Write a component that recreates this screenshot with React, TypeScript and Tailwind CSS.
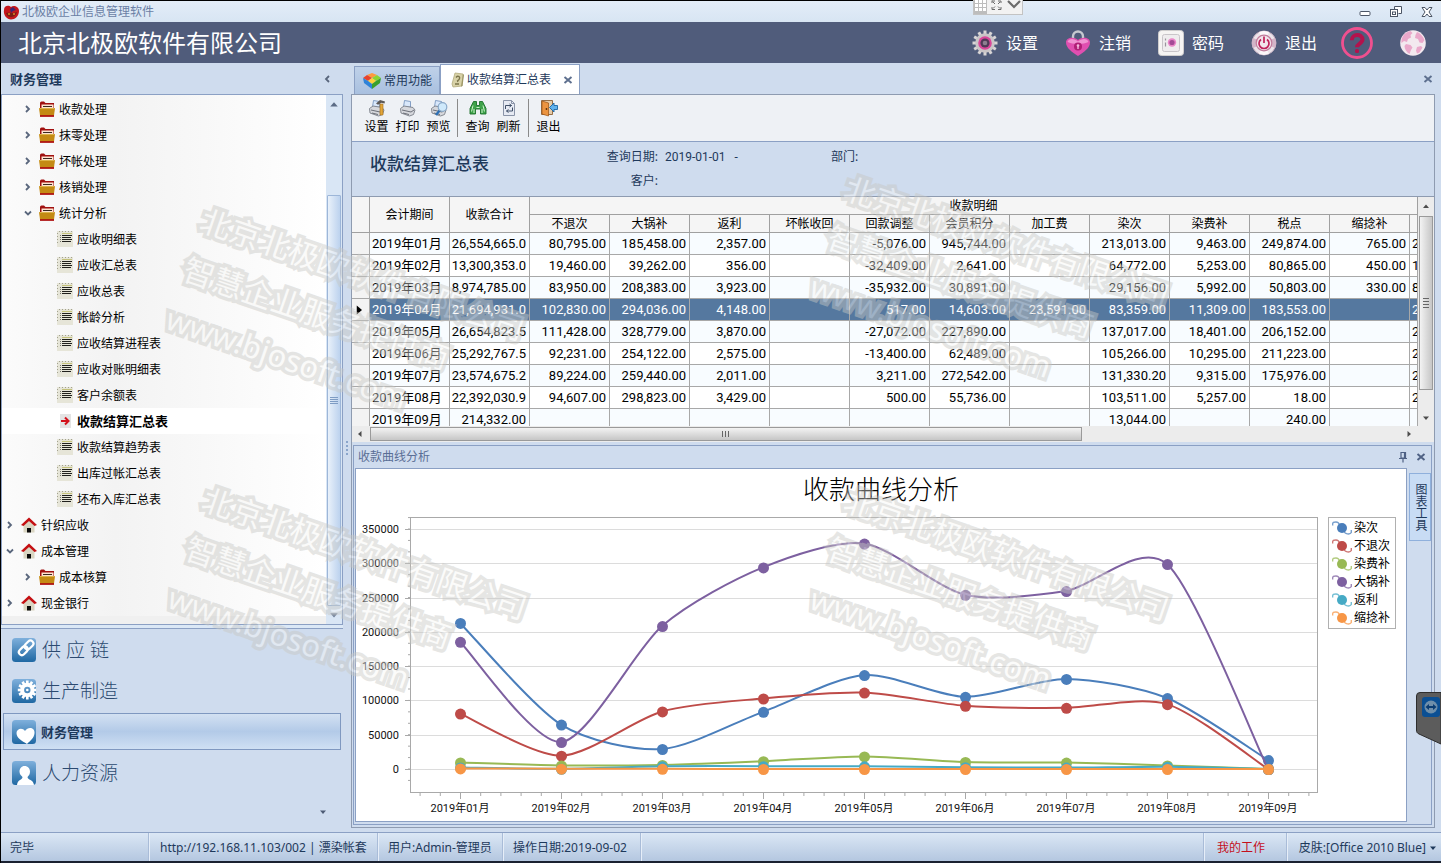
import React from "react";

const UI = "font-['Noto_Sans','Noto_Sans_CJK_SC',sans-serif]";
const NUM = "font-['Roboto','Noto_Sans_CJK_SC',sans-serif]";

/* ---------- small drawings ---------- */

function AppLogo() {
  return (
    <svg width="17" height="15" viewBox="0 0 17 15" aria-hidden="true">
      <path d="M1 5C1 0 6 0 8 2c2-2 8-1 8 4 0 5-4 8.500-8 8.500S0 10 1 5Z" fill="#c3161c" />
      <path d="M7 4l3-2 3 3-3 1-2 2z" fill="#3c2470" />
      <path d="M3 8c3-1 7 1 11-1-1 4-4 5-6 5s-4-1-5-4Z" fill="#7a1d12" />
      <circle cx="6" cy="9" r="1" fill="#d98a2b" />
      <circle cx="11" cy="9" r="1" fill="#d98a2b" />
    </svg>
  );
}

function FolderIcon() {
  return (
    <svg width="16" height="16" viewBox="0 0 16 16" aria-hidden="true">
      <path d="M1 2q0-1.500 1.500-1.500H5L6.500 2H15v13.500H1z" fill="#a01010" />
      <path d="M2.500 3.500h12V9h-12z" fill="#ffe3d0" />
      <path d="M4 5.500h9" stroke="#3a2a20" />
      <path d="M0 7h16l-1 7.500H1z" fill="#c48a14" />
      <path d="M0.500 7.500h15" stroke="#dcb44a" />
      <path d="M1 15h14" stroke="#b01010" strokeWidth="1.500" />
    </svg>
  );
}

function ListIcon() {
  return (
    <svg width="16" height="16" viewBox="0 0 16 16" shapeRendering="crispEdges" aria-hidden="true">
      <path d="M0 0h16v16H0z" fill="#e6e5d8" />
      <path d="M0.500 2v12M2 0.500h13" stroke="#a3a28f" strokeDasharray="1 2" />
      <path d="M5 2.500h10" stroke="#c4c17a" />
      <path d="M5 4.500h10M5 6.500h9M5 8.500h10M5 10.500h9" stroke="#20201c" />
      <path d="M3 4.500h1M3 6.500h1M3 8.500h1M3 10.500h1" stroke="#77776c" />
    </svg>
  );
}

function CurrentIcon() {
  return (
    <svg width="16" height="16" viewBox="0 0 16 16" aria-hidden="true">
      <path d="M3 1h11v14H3z" fill="#e4e4e4" />
      <path d="M4 8h7M8 4.500L11.500 8 8 11.500" stroke="#d3121c" strokeWidth="2" fill="none" />
    </svg>
  );
}

function HouseIcon() {
  return (
    <svg width="16" height="16" viewBox="0 0 16 16" aria-hidden="true">
      <path d="M2.500 7.500L8 3l5.500 4.500V15.500h-11z" fill="#d9d5c2" />
      <path d="M6 11h4v4.500H6z" fill="#0a0a0a" />
      <path d="M0 8L8 0.500 16 8l-2.500 1L8 4 2.500 9z" fill="#c40f12" />
    </svg>
  );
}

function Chevron({ open }: { open: boolean }) {
  return (
    <svg width="8" height="8" viewBox="0 0 8 8" aria-hidden="true">
      <path d={open ? "M1 2.500l3 3 3-3" : "M2 1l3 3-3 3"} fill="none" stroke="#59667c" strokeWidth="1.800" />
    </svg>
  );
}

function CloseX({ color = "#5d6f8e" }: { color?: string }) {
  return (
    <svg width="10" height="10" viewBox="0 0 10 10" aria-hidden="true">
      <path d="M1.500 2l7 6M8.500 2l-7 6" stroke={color} strokeWidth="1.900" />
    </svg>
  );
}

function Arrow({ dir, color = "#4c4c4c", size = 8 }: { dir: "up" | "down" | "left" | "right"; color?: string; size?: number }) {
  const paths = {
    up: "M1 6l3-3.500L7 6z",
    down: "M1 2.500l3 3.500 3-3.500z",
    left: "M5.500 1L2 4l3.500 3z",
    right: "M2.500 1L6 4 2.500 7z",
  };
  return (
    <svg width={size} height={size} viewBox="0 0 8 8" aria-hidden="true">
      <path d={paths[dir]} fill={color} />
    </svg>
  );
}

const TEETH = [0, 30, 60, 90, 120, 150, 180, 210, 240, 270, 300, 330];

function GearPink() {
  return (
    <svg width="26" height="26" viewBox="0 0 26 26" aria-hidden="true">
      {TEETH.map((a) => (
        <rect key={a} x="11.500" y="0.500" width="3" height="5" fill="#d9d6d6" transform={`rotate(${a} 13 13)`} />
      ))}
      <circle cx="13" cy="13" r="9.800" fill="#c9c5c7" />
      <circle cx="13" cy="13" r="6.800" fill="#d9479a" />
      <circle cx="13" cy="13" r="4.600" fill="#4f3a57" />
      <circle cx="13" cy="13" r="2.300" fill="#8d7e90" />
    </svg>
  );
}

function LockPink() {
  return (
    <svg width="26" height="26" viewBox="0 0 26 26" aria-hidden="true">
      <path d="M8 11V6.500a5 5 0 0110 0V11" fill="none" stroke="#c6c9cf" strokeWidth="2.400" />
      <path d="M13 26C7 22 1 18 1 12.500 1 7 9 6.500 13 10c4-3.500 12-3 12 2.500C25 18 19 22 13 26Z" fill="#e04fb0" />
      <path d="M2.500 12c1-4 7-4 10.500-.5 3.500-3.500 9.500-3.500 10.500.5-5 2.500-16 2.500-21 0Z" fill="#f193d2" />
      <circle cx="13" cy="16.500" r="4" fill="#b01f76" />
      <circle cx="13" cy="15.500" r="1.300" fill="#f5b7de" />
      <path d="M13 16v3" stroke="#f5b7de" strokeWidth="1.400" />
    </svg>
  );
}

function SafeIcon() {
  return (
    <svg width="26" height="26" viewBox="0 0 26 26" aria-hidden="true">
      <rect x="0.500" y="0.500" width="25" height="25" rx="3" fill="#f6f4f3" stroke="#cfcdcd" />
      <rect x="4.500" y="4.500" width="17" height="17" rx="2" fill="#efecee" stroke="#c9c5c9" />
      <circle cx="14" cy="12.500" r="4.200" fill="#ea86c8" />
      <circle cx="14" cy="12.500" r="2.600" fill="#a34a96" />
      <path d="M7.500 8.500v2M7.500 12.500v4" stroke="#9a949c" strokeWidth="1.200" />
    </svg>
  );
}

function PowerIcon() {
  return (
    <svg width="26" height="26" viewBox="0 0 26 26" aria-hidden="true">
      <circle cx="13" cy="13" r="12" fill="#ece4eb" stroke="#c3aebf" />
      <path d="M13 13L8 2.200a12 12 0 0110 0zM13 13l5 10.800a12 12 0 01-10 0z" fill="#fbf7fa" />
      <path d="M13 13L2.200 8a12 12 0 000 10zM13 13l10.800 5a12 12 0 000-10z" fill="#d3b4c8" />
      <circle cx="13" cy="13" r="7.800" fill="#f1e4ec" stroke="#c07c9c" strokeWidth="1.200" />
      <path d="M10 9.500a5 5 0 106 0M13 6.500v6.500" fill="none" stroke="#c0205a" strokeWidth="1.700" />
    </svg>
  );
}

function HelpIcon() {
  return (
    <svg width="32" height="32" viewBox="0 0 32 32" aria-hidden="true">
      <circle cx="16" cy="16" r="14.500" fill="none" stroke="#f0508f" strokeWidth="2.800" />
      <path d="M10.800 13.200C10.800 6.500 21.500 6.500 21.500 12.600c0 3.800-5.500 4-5.500 7.600" fill="none" stroke="#b3124d" strokeWidth="4" />
      <rect x="14" y="22" width="4" height="4" rx="1.500" fill="#b3124d" />
    </svg>
  );
}

function GlobeIcon() {
  return (
    <svg width="26" height="26" viewBox="0 0 26 26" aria-hidden="true">
      <circle cx="13" cy="13" r="12.800" fill="#f3e9ef" />
      <path d="M4 4.500c2-2 4-3 6.500-3.500l2 2-2 2 .5 2.500L8 9l-1 3-3-1-2.500 2C1 10 2 7 4 4.500ZM17 2c3 1 6 4 7.500 8l-2 3-3-.5L18 9l-3-1 .5-3zM6 14l4.500 1 2 2.500-1.500 2.500-1.500 4c-3-1.500-5-5-5-8zM17 17l4-1 1.500 1.500-3 5-2.500 1-1-3z" fill="#eaa8ca" />
    </svg>
  );
}

function BlocksIcon() {
  return (
    <svg width="20" height="16" viewBox="0 0 20 16" aria-hidden="true">
      <path d="M5 2l5-2 5 2-5 3z" fill="#ff9a3c" />
      <path d="M1 5l4-3 5 3-4 3z" fill="#e8432d" />
      <path d="M10 5l5-3 4 3-5 3z" fill="#8bd431" />
      <path d="M6 8l4-3 4 3-4 3z" fill="#ffd23a" />
      <path d="M1 5l5 3 4 3v5L2 10z" fill="#2f83d8" />
      <path d="M19 5l-5 3-4 3v5l8-6z" fill="#3aa02b" />
    </svg>
  );
}

function NoteIcon() {
  return (
    <svg width="14" height="16" viewBox="0 0 14 16" aria-hidden="true">
      <path d="M4 1l8 1-1 12-9 1-1-3z" fill="#d8d2a8" stroke="#b3ab7c" strokeWidth="0.800" />
      <path d="M5 5.500c2-2.500 5-.5 3 2L6.500 9l.5 1M4 12h4" stroke="#7a744a" strokeWidth="1.300" fill="none" />
      <path d="M12 2l1 1-1.500 11-1.500.5z" fill="#9d9767" />
    </svg>
  );
}

function PrinterIcon({ extra }: { extra?: "hammer" | "lens" }) {
  return (
    <svg width="18" height="18" viewBox="0 0 18 18" aria-hidden="true">
      <path d="M4.500 8L5.500 1.500l6 1V8z" fill="#d9e8fb" stroke="#6b8bb8" strokeWidth="0.800" />
      <path d="M1.500 9.500L5 7l9 1.500 2 2.500-1.500 4.500-4 1.500L2 14z" fill="#d6d8dd" stroke="#7b7f88" strokeWidth="0.900" />
      <path d="M3 11l9 2 3-2M4 14l6 1.500" stroke="#6b6f78" fill="none" />
      {extra === "hammer" && (
        <g>
          <path d="M8 4.500L12 1l5 1.500-.5 2-3-.8-3.500 2z" fill="#5c5856" />
          <path d="M12 5h3v11h-3z" fill="#e2a63a" stroke="#a36d17" strokeWidth="0.600" />
        </g>
      )}
      {extra === "lens" && (
        <g>
          <path d="M10 11l-4 5" stroke="#2c6fb4" strokeWidth="2.400" />
          <circle cx="12.500" cy="8" r="4.300" fill="#cfe9fb" stroke="#8aa9c9" strokeWidth="1.200" />
        </g>
      )}
    </svg>
  );
}

function BinocularsIcon() {
  return (
    <svg width="18" height="18" viewBox="0 0 18 18" aria-hidden="true">
      <path d="M4.500 2.500h3v4h3v-4h3l3.500 7v5.500h-5.500v-5h-5v5H1V9.500z" fill="#3fa34a" stroke="#1c6f2a" strokeWidth="0.900" />
      <path d="M4 6.500l-1.500 6M14 6.500l1.500 6M5 10v4M13 10v4M7.500 8.500h3" stroke="#c9f2c9" />
    </svg>
  );
}

function RefreshDocIcon() {
  return (
    <svg width="18" height="18" viewBox="0 0 18 18" aria-hidden="true">
      <path d="M3.500 1.500h8l3 3v12h-11z" fill="#e6eaf3" stroke="#8a94a8" />
      <path d="M11.500 1.500v3h3" fill="none" stroke="#8a94a8" />
      <path d="M5.500 10V6.500h6M9.500 5l2 1.500-2 1.500M12.500 8.500V12h-6M8.500 10.500l-2 1.500 2 1.500" fill="none" stroke="#3f4f68" />
    </svg>
  );
}

function DoorIcon() {
  return (
    <svg width="18" height="18" viewBox="0 0 18 18" aria-hidden="true">
      <path d="M1.500 1.500h11v14h-11z" fill="#e5cba8" stroke="#8c6239" strokeWidth="0.900" />
      <path d="M2 2l6.500 2v13L2 15z" fill="#ec9440" stroke="#9a5214" strokeWidth="0.700" />
      <circle cx="6.500" cy="10" r="0.900" fill="#5a2e08" />
      <path d="M17.500 6.500v4H14V13L9.500 8.500 14 4v2.500z" fill="#5fb2ee" stroke="#1b64a3" strokeWidth="0.900" />
    </svg>
  );
}

function NavIcon({ kind }: { kind: string }) {
  return (
    <svg width="24" height="24" viewBox="0 0 24 24" aria-hidden="true">
      <defs>
        <linearGradient id={`nav-${kind}`} x1="0" y1="0" x2="0" y2="1">
          <stop offset="0" stopColor="#7fb0dc" />
          <stop offset="1" stopColor="#1f68a3" />
        </linearGradient>
      </defs>
      <rect width="24" height="24" rx="3.500" fill={`url(#nav-${kind})`} />
      {kind === "chain" && (
        <g fill="none" stroke="#fff" strokeWidth="2.200" transform="rotate(-45 14.500 9.500)">
          <rect x="5" y="6.500" width="10" height="6" rx="3" />
          <rect x="13" y="6.500" width="10" height="6" rx="3" />
        </g>
      )}
      {kind === "gear" && (
        <g>
          {TEETH.map((a) => (
            <rect key={a} x="14" y="1.500" width="2.600" height="4" fill="#fff" transform={`rotate(${a} 15.300 11)`} />
          ))}
          <circle cx="15.300" cy="11" r="5.200" fill="none" stroke="#fff" strokeWidth="4" />
          <circle cx="15.300" cy="11" r="1.300" fill="#fff" />
        </g>
      )}
      {kind === "heart" && (
        <path d="M15 24C10 21 4.500 18 4.500 13c0-4.500 6-6 8.500-2 3-5 10-3.500 9.500 2 -.3 5-4.500 8-7.500 11Z" fill="#fff" />
      )}
      {kind === "person" && (
        <path d="M12.500 5c3.500 0 5.500 2.500 5.500 5.500 0 2.500-1 4-2.500 5.500 0 3 6 2.500 6.500 8H5c.5-5.500 5.500-5 5.500-8C9 14.500 7.500 13 7.500 10.500 7.500 7.500 9.500 5 12.500 5Z" fill="#fff" />
      )}
    </svg>
  );
}

/* ---------- data ---------- */

type Node = { label: string; level: 0 | 1 | 2; open?: boolean; current?: boolean };

const tree: Node[] = [
  { label: "收款处理", level: 1 },
  { label: "抹零处理", level: 1 },
  { label: "坏帐处理", level: 1 },
  { label: "核销处理", level: 1 },
  { label: "统计分析", level: 1, open: true },
  { label: "应收明细表", level: 2 },
  { label: "应收汇总表", level: 2 },
  { label: "应收总表", level: 2 },
  { label: "帐龄分析", level: 2 },
  { label: "应收结算进程表", level: 2 },
  { label: "应收对账明细表", level: 2 },
  { label: "客户余额表", level: 2 },
  { label: "收款结算汇总表", level: 2, current: true },
  { label: "收款结算趋势表", level: 2 },
  { label: "出库过帐汇总表", level: 2 },
  { label: "坯布入库汇总表", level: 2 },
  { label: "针织应收", level: 0 },
  { label: "成本管理", level: 0, open: true },
  { label: "成本核算", level: 1 },
  { label: "现金银行", level: 0 },
];

const modules = [
  { label: "供 应 链", kind: "chain" },
  { label: "生产制造", kind: "gear" },
  { label: "财务管理", kind: "heart", active: true },
  { label: "人力资源", kind: "person" },
];

const detailColumns = ["不退次", "大锅补", "返利", "坏帐收回", "回款调整", "会员积分", "加工费", "染次", "染费补", "税点", "缩捻补", ""];

const rows: string[][] = [
  ["2019年01月", "26,554,665.0", "80,795.00", "185,458.00", "2,357.00", "", "-5,076.00", "945,744.00", "", "213,013.00", "9,463.00", "249,874.00", "765.00", "2"],
  ["2019年02月", "13,300,353.0", "19,460.00", "39,262.00", "356.00", "", "-32,409.00", "2,641.00", "", "64,772.00", "5,253.00", "80,865.00", "450.00", "1"],
  ["2019年03月", "8,974,785.00", "83,950.00", "208,383.00", "3,923.00", "", "-35,932.00", "30,891.00", "", "29,156.00", "5,992.00", "50,803.00", "330.00", "8"],
  ["2019年04月", "21,694,931.0", "102,830.00", "294,036.00", "4,148.00", "", "517.00", "14,603.00", "23,591.00", "83,359.00", "11,309.00", "183,553.00", "", "2"],
  ["2019年05月", "26,654,823.5", "111,428.00", "328,779.00", "3,870.00", "", "-27,072.00", "227,890.00", "", "137,017.00", "18,401.00", "206,152.00", "", "2"],
  ["2019年06月", "25,292,767.5", "92,231.00", "254,122.00", "2,575.00", "", "-13,400.00", "62,489.00", "", "105,266.00", "10,295.00", "211,223.00", "", "2"],
  ["2019年07月", "23,574,675.2", "89,224.00", "259,440.00", "2,011.00", "", "3,211.00", "272,542.00", "", "131,330.20", "9,315.00", "175,976.00", "", "2"],
  ["2019年08月", "22,392,030.9", "94,607.00", "298,823.00", "3,429.00", "", "500.00", "55,736.00", "", "103,511.00", "5,257.00", "18.00", "", "2"],
  ["2019年09月", "214,332.00", "", "", "", "", "", "", "", "13,044.00", "", "240.00", "", ""],
];
const SELECTED_ROW = 3;

const series = [
  { name: "染次", color: "#4a7ebb", values: [213013, 64772, 29156, 83359, 137017, 105266, 131330, 103511, 13044] },
  { name: "不退次", color: "#be4b48", values: [80795, 19460, 83950, 102830, 111428, 92231, 89224, 94607, 0] },
  { name: "染费补", color: "#98b954", values: [9463, 5253, 5992, 11309, 18401, 10295, 9315, 5257, 0] },
  { name: "大锅补", color: "#7d60a0", values: [185458, 39262, 208383, 294036, 328779, 254122, 259440, 298823, 0] },
  { name: "返利", color: "#46aac5", values: [2357, 356, 3923, 4148, 3870, 2575, 2011, 3429, 0] },
  { name: "缩捻补", color: "#f79646", values: [765, 450, 330, 0, 0, 0, 0, 0, 0] },
];

/* ---------- chart ---------- */

const PX = { left: 54, right: 961, top: 1, bottom: 276, zero: 252, unit: 240 / 350000, x0: 104, step: 101 };
const cx = (i: number) => PX.x0 + i * PX.step;
const cy = (v: number) => PX.zero - v * PX.unit;

function splinePath(values: number[]) {
  const p = values.map((v, i) => [cx(i), cy(v)]);
  const k = 0.8 / 6;
  let d = `M${p[0][0]} ${p[0][1]}`;
  for (let i = 0; i < p.length - 1; i++) {
    const a = p[Math.max(i - 1, 0)];
    const b = p[i];
    const c = p[i + 1];
    const e = p[Math.min(i + 2, p.length - 1)];
    d += `C${b[0] + (c[0] - a[0]) * k} ${b[1] + (c[1] - a[1]) * k} ${c[0] - (e[0] - b[0]) * k} ${c[1] - (e[1] - b[1]) * k} ${c[0]} ${c[1]}`;
  }
  return d;
}

function Chart() {
  const marks = [0, 50000, 100000, 150000, 200000, 250000, 300000, 350000];
  const minorY = Array.from({ length: 24 }, (_, i) => cy((i - 1) * (50000 / 3)));
  const minorX = Array.from({ length: 45 }, (_, i) => PX.x0 + (i - 2) * (PX.step / 5)).filter((x) => x < PX.right);
  return (
    <svg viewBox="0 0 962 304" className={`block h-auto w-full ${NUM}`} role="img" aria-label="收款曲线分析">
      <rect x={PX.left + 0.5} y={PX.top - 0.5} width={PX.right - PX.left} height={PX.bottom - PX.top} fill="#fff" stroke="#a9a9a9" />
      {marks.map((m) => (
        <g key={m}>
          <line x1={PX.left - 5} x2={PX.left} y1={Math.round(cy(m)) + 0.5} y2={Math.round(cy(m)) + 0.5} stroke="#a9a9a9" />
          <line x1={PX.left + 1} x2={PX.right} y1={Math.round(cy(m)) + 0.5} y2={Math.round(cy(m)) + 0.5} stroke="#dcdcdc" />
          <text x={PX.left - 11} y={cy(m) + 4} textAnchor="end" fontSize="11" fill="#111">
            {m}
          </text>
        </g>
      ))}
      {minorY.map((y) => (
        <line key={y} x1={PX.left - 2} x2={PX.left} y1={y} y2={y} stroke="#a9a9a9" />
      ))}
      {minorX.map((x) => (
        <line key={x} x1={x + 0.5} x2={x + 0.5} y1={PX.bottom} y2={PX.bottom + 3} stroke="#a9a9a9" />
      ))}
      {rows.map((r, i) => (
        <g key={r[0]}>
          <line x1={cx(i) + 0.5} x2={cx(i) + 0.5} y1={PX.bottom} y2={PX.bottom + 6} stroke="#a9a9a9" />
          <text x={cx(i)} y={PX.bottom + 19} textAnchor="middle" fontSize="11" fill="#111">
            {r[0]}
          </text>
        </g>
      ))}
      {series.map((s) => (
        <g key={s.name}>
          <path d={splinePath(s.values)} fill="none" stroke={s.color} strokeWidth="2" />
          {s.values.map((v, i) => (
            <circle key={i} cx={cx(i) + 0.5} cy={cy(v) + 0.5} r="5.500" fill={s.color} />
          ))}
        </g>
      ))}
    </svg>
  );
}

function Legend() {
  return (
    <ul className="w-[68px] shrink-0 self-start border border-[#b0b0b0] bg-white py-px pl-[3px]">
      {series.map((s) => (
        <li key={s.name} className="flex h-[18px] items-center gap-[2px] whitespace-nowrap text-[12px] leading-[18px] text-black">
          <svg width="20" height="14" viewBox="0 0 20 14" className="shrink-0" aria-hidden="true">
            <path d="M0.700 4.500C0.200 1 2 1 4 1s3 1 3.500 3M12 10c.5 3 6 4 7.300 1.500V9" fill="none" stroke={s.color} strokeOpacity="0.750" strokeWidth="1.400" />
            <circle cx="10" cy="7" r="5" fill={s.color} />
          </svg>
          {s.name}
        </li>
      ))}
    </ul>
  );
}

/* ---------- sections ---------- */

function TitleBar() {
  return (
    <div className="flex h-[22px] items-center border-t border-black bg-gradient-to-b from-[#e3edf8] to-[#d8e5f3] pt-px pr-2 pl-[2px] text-[#6b7fa5]">
      <AppLogo />
      <span className="ml-[2px] text-[12px]">北极欧企业信息管理软件</span>
      <div className="ml-auto flex items-center gap-[19px]">
        <button aria-label="最小化">
          <svg width="12" height="12" viewBox="0 0 12 12" className="block">
            <rect x="1" y="5.500" width="10" height="4" rx="1" fill="#fff" stroke="#4c5666" />
          </svg>
        </button>
        <button aria-label="还原">
          <svg width="12" height="12" viewBox="0 0 12 12" className="block">
            <path d="M4.500 0.500h7v7h-3M4.500 3V0.500" fill="#fff" stroke="#4c5666" />
            <rect x="0.500" y="3.500" width="7" height="7" fill="#fff" stroke="#4c5666" />
            <rect x="2.500" y="6" width="3" height="2.500" fill="#fff" stroke="#4c5666" />
          </svg>
        </button>
        <button aria-label="关闭">
          <svg width="12" height="12" viewBox="0 0 12 12" className="block">
            <path d="M1 1.500h3l2 2.500 2-2.500h3L8 6l3 4.500H8L6 8l-2 2.500H1L4 6z" fill="#fff" stroke="#4c5666" />
          </svg>
        </button>
      </div>
    </div>
  );
}

function Header() {
  const items = [
    { label: "设置", icon: <GearPink /> },
    { label: "注销", icon: <LockPink /> },
    { label: "密码", icon: <SafeIcon /> },
    { label: "退出", icon: <PowerIcon /> },
  ];
  return (
    <header className="flex h-[41px] items-center bg-[#505c7b] pr-[15px] pl-[17px] text-white">
      <h1 className="text-[24px] leading-8">北京北极欧软件有限公司</h1>
      <div className="ml-auto flex items-center gap-[27px]">
        {items.map((it) => (
          <button key={it.label} className="flex items-center gap-2 text-[16px]">
            {it.icon}
            {it.label}
          </button>
        ))}
        <button aria-label="帮助" className="-ml-[3px]">
          <HelpIcon />
        </button>
        <button aria-label="网站">
          <GlobeIcon />
        </button>
      </div>
    </header>
  );
}

const INDENT = ["pl-[4px]", "pl-[22px]", "pl-[40px]"];

function Sidebar() {
  return (
    <aside className="flex w-[342px] shrink-0 flex-col">
      <div className="flex h-[31px] items-center justify-between pr-3 pl-[9px]">
        <h2 className="text-[13px] font-bold text-[#1e395b]">财务管理</h2>
        <button aria-label="收起" className="rotate-180">
          <Chevron open={false} />
        </button>
      </div>
      <div className="flex border border-[#8ba0c4] bg-[#f2f2f2]">
        <ul className="min-w-0 flex-1 bg-gradient-to-r from-[#fbfbfb] via-[#f3f3f3] via-35% to-white pt-px">
          {tree.map((n) => (
            <li key={n.label} className={n.current ? "bg-white font-bold" : ""}>
              <button className={`flex h-[26px] w-full items-center text-[12px] text-black ${INDENT[n.level]}`}>
                <span className="mr-[7px] flex w-2 justify-center">{n.level < 2 && <Chevron open={!!n.open} />}</span>
                {n.level === 0 && <HouseIcon />}
                {n.level === 1 && <FolderIcon />}
                {n.level === 2 && (n.current ? <CurrentIcon /> : <ListIcon />)}
                <span className={n.current ? "ml-1 text-[13px]" : "ml-1 pt-px"}>{n.label}</span>
              </button>
            </li>
          ))}
          <li className="h-2 bg-[#f0f0f0]" aria-hidden="true" />
        </ul>
        <div className="flex w-[16px] flex-col items-center bg-[#d9e6f5] py-1">
          <Arrow dir="up" color="#5b6b85" size={10} />
          <div className="mt-[86px] flex w-[14px] flex-1 flex-col items-center justify-center gap-[1px] rounded-[1px] border border-[#9db6d8] bg-gradient-to-r from-[#e9f1fa] to-[#bcd2ee]">
            {[0, 1, 2, 3].map((i) => (
              <span key={i} className="h-px w-2 bg-[#7e9cc4]" />
            ))}
          </div>
          <div className="mt-1">
            <Arrow dir="down" color="#6f7f99" size={10} />
          </div>
        </div>
      </div>
      <div className="h-[4px] border-b border-[#8ba0c4] bg-[#dbe8f6]" />
      <nav className="flex flex-1 flex-col pr-[2px] pl-[2px]">
        {modules.map((m) => (
          <button
            key={m.label}
            className={
              m.active
                ? "my-[2px] flex h-[37px] items-center gap-[5px] border border-[#7f98c0] bg-gradient-to-b from-[#d3e1f2] via-[#b3cae8] to-[#cfe0f3] pl-2 text-[13px] font-bold text-[#1e395b]"
                : "flex h-[41px] items-center gap-[6px] pl-[9px] text-[19px] font-light text-[#2c4a70]"
            }
          >
            <NavIcon kind={m.kind} />
            {m.label}
          </button>
        ))}
        <div className="mt-auto mb-[16px] flex justify-end pr-[14px]">
          <button aria-label="更多">
            <Arrow dir="down" color="#4d5b74" />
          </button>
        </div>
      </nav>
    </aside>
  );
}

function Toolbar() {
  const groups = [
    [
      { label: "设置", icon: <PrinterIcon extra="hammer" /> },
      { label: "打印", icon: <PrinterIcon /> },
      { label: "预览", icon: <PrinterIcon extra="lens" /> },
    ],
    [
      { label: "查询", icon: <BinocularsIcon /> },
      { label: "刷新", icon: <RefreshDocIcon /> },
    ],
    [{ label: "退出", icon: <DoorIcon /> }],
  ];
  return (
    <div className="flex h-[47px] items-center border-b border-[#8ba0c4] bg-[#eef1f5] pl-[9px]">
      {groups.map((g, i) => (
        <div key={i} className={i === 0 ? "flex h-[38px] items-center pr-[3px]" : "flex h-[38px] items-center border-l border-[#8a8a8a] px-1"}>
          {g.map((b) => (
            <button key={b.label} className="flex w-[31px] flex-col items-center text-[12px] leading-[20px] text-black">
              {b.icon}
              {b.label}
            </button>
          ))}
        </div>
      ))}
    </div>
  );
}

function Grid() {
  const th = "border-r border-b border-[#a0a0a0] bg-[#f5f5f5] p-0 text-[12px] font-normal leading-[17px] whitespace-nowrap";
  return (
    <div className="flex border-t border-[#8e9bb0] bg-[#ececec]">
      <div className="min-w-0 flex-1">
        <div className="h-[229px] overflow-hidden bg-white">
          <table className="w-full table-fixed border-separate border-spacing-0 text-black">
            <colgroup>
              <col className="w-[18px]" />
              {Array.from({ length: 13 }, (_, i) => (
                <col key={i} className="w-[80px]" />
              ))}
              <col />
            </colgroup>
            <thead>
              <tr className="h-[18px]">
                <th rowSpan={2} className={th} />
                <th rowSpan={2} className={th}>会计期间</th>
                <th rowSpan={2} className={th}>收款合计</th>
                <th colSpan={12} className={th}>收款明细</th>
              </tr>
              <tr className="h-[18px]">
                {detailColumns.map((c) => (
                  <th key={c} className={th}>
                    {c}
                  </th>
                ))}
              </tr>
            </thead>
            <tbody className={NUM}>
              {rows.map((r, ri) => {
                const sel = ri === SELECTED_ROW;
                const tone = sel ? "bg-[#55789f] text-white" : ri % 2 === 0 ? "bg-[#f8fcff]" : "bg-white";
                return (
                  <tr key={r[0]} className="h-[22px]">
                    <td className="border-r border-b border-[#a8a8a8] bg-[#f3f3f3] p-0">
                      {sel && (
                        <span className="flex justify-center pr-1">
                          <Arrow dir="right" color="#000" size={12} />
                        </span>
                      )}
                    </td>
                    {r.map((c, ci) => (
                      <td
                        key={ci}
                        className={`overflow-hidden border-r border-b border-[#a8a8a8] py-0 text-[13px] leading-[21px] whitespace-nowrap ${ci === 0 || ci === 13 ? "pr-0 pl-[2px] text-left" : "pr-[3px] pl-0 text-right"} ${tone}`}
                      >
                        {c}
                      </td>
                    ))}
                  </tr>
                );
              })}
            </tbody>
          </table>
        </div>
        <div className="flex h-[16px] items-center gap-[6px] pl-1">
          <Arrow dir="left" />
          <div className="flex h-[14px] w-[67%] items-center justify-center gap-[2px] border border-[#9a9a9a] bg-gradient-to-b from-[#f3f3f3] to-[#c6c6c6]">
            {[0, 1, 2].map((i) => (
              <span key={i} className="h-[6px] w-px bg-[#666]" />
            ))}
          </div>
          <div className="mr-[5px] ml-auto flex">
            <Arrow dir="right" />
          </div>
        </div>
      </div>
      <div className="flex w-4 flex-col items-center py-[5px]">
        <Arrow dir="up" />
        <div className="mt-[6px] flex h-[174px] w-[14px] flex-col items-center justify-center gap-[2px] border border-[#9a9a9a] bg-gradient-to-r from-[#f3f3f3] to-[#c6c6c6]">
          {[0, 1, 2, 3].map((i) => (
            <span key={i} className="h-px w-[6px] bg-[#666]" />
          ))}
        </div>
        <div className="mt-6">
          <Arrow dir="down" />
        </div>
      </div>
    </div>
  );
}

function ChartPanel() {
  return (
    <section className="mt-[3px] mr-[2px] mb-[2px] ml-[1px] flex flex-1 flex-col border border-[#8ba0c4] pb-[2px]">
      <div className="flex h-[22px] items-center pr-[5px] pl-1 text-[12px] text-[#5a6e95]">
        <h3>收款曲线分析</h3>
        <button aria-label="固定" className="mr-2 ml-auto">
          <svg width="10" height="12" viewBox="0 0 10 12">
            <path d="M3 1.500h4.500V7H3zM1 7.500h8M5 7.500V11.500M6.500 1.500V7" fill="none" stroke="#4f6184" strokeWidth="1.200" />
          </svg>
        </button>
        <button aria-label="关闭面板">
          <CloseX color="#4f6184" />
        </button>
      </div>
      <div className="flex flex-1 items-start">
        <div className="ml-[1px] min-w-0 flex-1 self-stretch border border-[#8ba0c4] bg-white">
          <h4 className="h-[48px] pt-[3px] text-center text-[26px] leading-[34px] font-light text-black">收款曲线分析</h4>
          <div className="flex pr-[10px]">
            <div className="mr-[10px] min-w-0 flex-1">
              <Chart />
            </div>
            <Legend />
          </div>
        </div>
        <button className="mt-[5px] ml-[2px] flex h-[68px] w-[22px] items-center justify-center border border-[#8fb0dc] bg-[#c8dcf4] text-[12px] leading-5 text-[#1e395b] [writing-mode:vertical-rl]">
          图表工具
        </button>
      </div>
    </section>
  );
}

function Workspace() {
  return (
    <main className="flex min-w-0 flex-1 flex-col pr-[6px]">
      <div className="flex h-[31px] items-end pl-[3px]" role="tablist">
        <button role="tab" aria-selected="false" className="flex h-[28px] items-center gap-[2px] border border-b-0 border-[#8ba0c4] bg-gradient-to-b from-[#bfd1e9] to-[#a9c0df] px-[7px] text-[12px] text-[#1e395b]">
          <BlocksIcon />
          常用功能
        </button>
        <button role="tab" aria-selected="true" className="flex h-[30px] items-center gap-[2px] border border-b-0 border-[#8ba0c4] bg-white pr-[6px] pl-[10px] text-[12px] text-[#1e395b]">
          <NoteIcon />
          收款结算汇总表
          <span className="ml-[10px]">
            <CloseX />
          </span>
        </button>
        <button aria-label="关闭" className="mr-[2px] mb-[10px] ml-auto">
          <CloseX />
        </button>
      </div>
      <div className="mb-[4px] flex flex-1 flex-col border border-[#8e9bb0] bg-[#cfdcee]">
        <Toolbar />
        <div className="flex h-[54px] items-start pl-[18px] text-[#1e395b]">
          <h2 className="mt-[10px] w-[234px] text-[17px] leading-6 font-medium">收款结算汇总表</h2>
          <dl className="grid grid-cols-[54px_159px_28px_1fr] gap-x-[7px] pt-[3px] text-[12px] leading-6 whitespace-nowrap">
            <dt className="text-right">查询日期:</dt>
            <dd className="font-['Roboto',sans-serif] whitespace-pre">2019-01-01   -</dd>
            <dt>部门:</dt>
            <dd />
            <dt className="text-right">客户:</dt>
            <dd />
          </dl>
        </div>
        <Grid />
        <ChartPanel />
      </div>
    </main>
  );
}

function StatusBar() {
  const cell = "flex h-full items-center border-r border-[#a9bcd8] pt-px shadow-[1px_0_0_#e6eef8]";
  return (
    <footer className="flex h-[31px] items-center border-t border-b-2 border-t-[#8ba0c4] border-b-[#1a2130] bg-gradient-to-b from-[#dbe7f5] to-[#b4c7e0] text-[12px] text-[#1e395b]">
      <span className={`${cell} w-[148px] pl-[9px]`}>完毕</span>
      <span className={`${cell} w-[229px] pl-[11px]`}>http://192.168.11.103/002 | 漂染帐套</span>
      <span className={`${cell} w-[125px] pl-[10px]`}>用户:Admin-管理员</span>
      <span className={`${cell} w-[138px] pl-[10px]`}>操作日期:2019-09-02</span>
      <span className={`${cell} flex-1`} />
      <a href="#work" className={`${cell} w-[83px] pl-[13px] text-[#c4101c]`}>
        我的工作
      </a>
      <button className="flex h-full w-[154px] items-center justify-end gap-[3px] pt-px pr-1 whitespace-nowrap">
        皮肤:[Office 2010 Blue]
        <Arrow dir="down" color="#1e395b" />
      </button>
    </footer>
  );
}

const MARKS = ["left-[209px] top-[194px]", "left-[853px] top-[162px]", "left-[211px] top-[473px]", "left-[853px] top-[474px]"];

function Watermarks() {
  return (
    <div className="pointer-events-none absolute inset-0 overflow-hidden" aria-hidden="true">
      {MARKS.map((pos) => (
        <div
          key={pos}
          className={`absolute origin-top-left rotate-[19deg] text-[31px] leading-[52px] whitespace-nowrap text-[#f7f7f5] opacity-45 [-webkit-text-stroke:7px_#c8c8c4] [paint-order:stroke_fill] [stroke-linejoin:round] ${pos}`}
        >
          <p>北京北极欧软件有限公司</p>
          <p>智慧企业服务提供商</p>
          <p>www.bjosoft.com</p>
        </div>
      ))}
    </div>
  );
}

function RemoteWidgets() {
  return (
    <>
      <div className="absolute top-0 right-[418px] flex h-[15px] w-[50px] items-center justify-around border border-t-0 border-[#c3c3c3] bg-[#f2f2f2]">
        <svg width="48" height="14" viewBox="0 0 48 14" aria-hidden="true">
          <path d="M0 0h13v14H0z" fill="#bdbdbd" />
          <path d="M1 1.500h12M1 5.500h12M1 9.500h12" stroke="#fff" strokeWidth="3" strokeDasharray="3 1" />
          <path d="M18 3V0.500M18 1h3M27 3V1h-3M18 7v2.500h3M27 7v2.500h-3M19 2l2 2M26 2l-2 2M19 8.500l2-2M26 8.500l-2-2" stroke="#6b6b6b" fill="none" />
          <path d="M34 1l6 6 6-6" stroke="#6b6b6b" strokeWidth="2.200" fill="none" />
        </svg>
      </div>
      <div className="absolute top-[692px] right-0">
        <svg width="25" height="53" viewBox="0 0 25 53" className="block" aria-hidden="true">
          <path d="M4 .5H25V52L3 42C1 41 .5 40 .5 38V4Q.5 .5 4 .5Z" fill="#5c5c5c" stroke="#2e2e2e" />
          <rect x="6" y="5" width="18" height="20" rx="3" fill="#0b4f93" />
          <circle cx="15" cy="15" r="6.500" fill="#6f8faa" />
          <path d="M9.500 15l3.500-3v2h4v-2l3.500 3-3.500 3v-2h-4v2z" fill="#0b3d73" />
        </svg>
      </div>
    </>
  );
}

export default function App() {
  return (
    <div className={`relative flex min-h-screen flex-col border-l border-black bg-[#cfdcee] leading-4 ${UI}`}>
      <TitleBar />
      <Header />
      <div className="flex flex-1">
        <Sidebar />
        <div className="flex w-[8px] shrink-0 flex-col items-center justify-center gap-[2px]">
          {[0, 1, 2, 3].map((i) => (
            <span key={i} className="h-[2px] w-[2px] bg-[#8aa5cb]" />
          ))}
        </div>
        <Workspace />
      </div>
      <StatusBar />
      <Watermarks />
      <RemoteWidgets />
    </div>
  );
}
